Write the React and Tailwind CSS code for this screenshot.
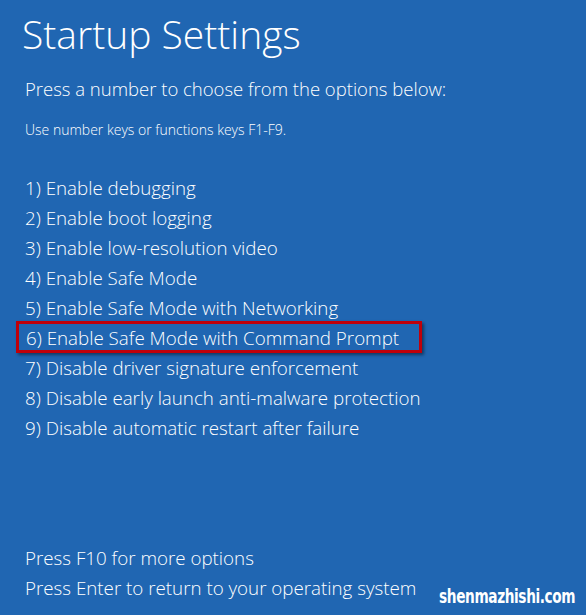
export default function App() {
  const options = [
    '1) Enable debugging',
    '2) Enable boot logging',
    '3) Enable low-resolution video',
    '4) Enable Safe Mode',
    '5) Enable Safe Mode with Networking',
    '6) Enable Safe Mode with Command Prompt',
    '7) Disable driver signature enforcement',
    '8) Disable early launch anti-malware protection',
    '9) Disable automatic restart after failure',
  ]

  return (
    <div
      className="relative w-[586px] h-[615px] bg-[#2066b2] text-white overflow-hidden flex flex-col"
      style={{ fontFamily: '"Open Sans", "Noto Sans", sans-serif' }}
    >
      <h1 className="text-[39px] font-light leading-none pl-[22px] pt-[14px]">Startup Settings</h1>
      <p className="text-[18.5px] font-light leading-none pl-[25px] mt-[27px]">
        Press a number to choose from the options below:
      </p>
      <p className="text-[14px] font-light leading-none pl-[25px] mt-[24px]">
        Use number keys or functions keys F1-F9.
      </p>

      <ul className="mt-[37px] flex flex-col">
        {options.map((o, i) => (
          <li key={o} className="h-[30px] flex items-center pl-[25px]">
            {i === 5 ? (
              <span className="-ml-[9px] -mt-[3px] pl-[7px] pr-[20px] h-[32px] flex items-center border-[3px] border-[#c0000a] shadow-[2px_2px_3px_rgba(0,0,0,0.45)] text-[18.75px] font-light">
                <span className="mt-[3px]">{o}</span>
              </span>
            ) : (
              <span className="text-[18.75px] font-light">{o}</span>
            )}
          </li>
        ))}
      </ul>

      <div className="mt-auto pb-[12px] flex flex-col whitespace-nowrap">
        <p className="h-[30px] flex items-center pl-[25px] text-[18.75px] font-light">Press F10 for more options</p>
        <p className="h-[30px] flex items-center pl-[25px] text-[18.75px] font-light">
          Press Enter to return to your operating system
        </p>
      </div>

      {/* site watermark stamped over the corner */}
      <span
        className="absolute right-[11px] bottom-[5px] text-[19px] font-bold tracking-tight scale-x-[0.8] origin-right whitespace-nowrap"
        style={{ fontFamily: '"Liberation Sans Narrow", "DejaVu Sans Condensed", sans-serif' }}
      >
        shenmazhishi.com
      </span>
    </div>
  )
}
